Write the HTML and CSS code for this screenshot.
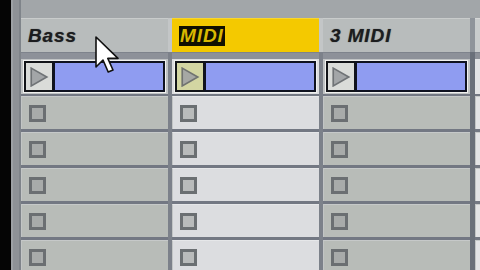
FILE: index.html
```html
<!DOCTYPE html>
<html>
<head>
<meta charset="utf-8">
<link rel="stylesheet" href="styles.css">
</head>
<body>
<div class="screen">
  <div class="edge-black"></div>
  <div class="edge-gray"></div>
  <div class="tracks">
    <div class="track">
      <div class="header"><span class="name">Bass</span></div>
      <div class="band"></div>
      <div class="clip-row"><div class="clip"><div class="play"><svg width="20" height="20" viewBox="0 0 18 18"><path d="M2 1 L16 9 L2 17 Z" fill="#a3a6a8" stroke="#6f7376" stroke-width="1.5"/></svg></div><div class="bar"></div></div></div>
      <div class="slot"><span class="stop"></span></div>
      <div class="slot"><span class="stop"></span></div>
      <div class="slot"><span class="stop"></span></div>
      <div class="slot"><span class="stop"></span></div>
      <div class="slot"><span class="stop"></span></div>
    </div>
    <div class="sep"></div>
    <div class="track sel">
      <div class="header"><span class="name hl">MIDI</span></div>
      <div class="band"></div>
      <div class="clip-row"><div class="clip"><div class="play"><svg width="20" height="20" viewBox="0 0 18 18"><path d="M2 1 L16 9 L2 17 Z" fill="#a6a8a4" stroke="#707370" stroke-width="1.5"/></svg></div><div class="bar"></div></div></div>
      <div class="slot"><span class="stop"></span></div>
      <div class="slot"><span class="stop"></span></div>
      <div class="slot"><span class="stop"></span></div>
      <div class="slot"><span class="stop"></span></div>
      <div class="slot"><span class="stop"></span></div>
    </div>
    <div class="sep"></div>
    <div class="track">
      <div class="header"><span class="name">3 MIDI</span></div>
      <div class="band"></div>
      <div class="clip-row"><div class="clip"><div class="play"><svg width="20" height="20" viewBox="0 0 18 18"><path d="M2 1 L16 9 L2 17 Z" fill="#a3a6a8" stroke="#6f7376" stroke-width="1.5"/></svg></div><div class="bar"></div></div></div>
      <div class="slot"><span class="stop"></span></div>
      <div class="slot"><span class="stop"></span></div>
      <div class="slot"><span class="stop"></span></div>
      <div class="slot"><span class="stop"></span></div>
      <div class="slot"><span class="stop"></span></div>
    </div>
    <div class="divider"></div>
    <div class="track next">
      <div class="header"></div>
      <div class="band"></div>
      <div class="clip-row"></div>
      <div class="slot"></div>
      <div class="slot"></div>
      <div class="slot"></div>
      <div class="slot"></div>
      <div class="slot"></div>
    </div>
  </div>
  <svg class="cursor" width="26" height="38" viewBox="0 0 13 19">
    <path d="M0.5 0.5 L0.5 15.5 L4 12 L6.6 18 L9 17 L6.4 11.2 L11.5 11.2 Z" fill="#ffffff" stroke="#111111" stroke-width="0.8" stroke-linejoin="round"/>
  </svg>
</div>
</body>
</html>
```
FILE: styles.css
```css
html, body {
  margin: 0;
  padding: 0;
}
body {
  width: 480px;
  height: 270px;
  overflow: hidden;
  background: #a2a6a9;
  font-family: "Liberation Sans", Arial, sans-serif;
}
.screen {
  position: relative;
  display: flex;
  width: 480px;
  height: 270px;
  overflow: hidden;
}
.edge-black {
  width: 11px;
  flex: none;
  background: #050505;
}
.edge-gray {
  width: 10px;
  flex: none;
  background: #8e9297;
  border-left: 2px solid #9da1a5;
  box-sizing: border-box;
  box-shadow: inset -2px 0 0 #7f848a;
}
.tracks {
  display: flex;
  flex: none;
  padding-top: 18px;
}
.track {
  width: 147px;
  flex: none;
  display: flex;
  flex-direction: column;
  background: #737883;
}
.sep {
  width: 4px;
  flex: none;
  background: linear-gradient(#c3c6c7 0 34px, #7c818a 34px);
}
.divider {
  width: 5px;
  flex: none;
  background: linear-gradient(#8f949b 0 34px, #6a707a 34px);
}
.header {
  height: 34px;
  flex: none;
  box-sizing: border-box;
  background: #b8bcbc;
  border-top: 1px solid #c9cccc;
  display: flex;
  align-items: center;
  padding-left: 7px;
}
.name {
  font-weight: bold;
  font-style: italic;
  font-size: 19px;
  color: #1c1d1f;
  letter-spacing: 0.9px;
  text-shadow: 0 0 1px rgba(0,0,0,0.6);
}
.sel .header {
  background: #f4c900;
  border-top-color: #f8d630;
}
.name.hl {
  background: #111000;
  color: #d9b800;
  padding: 1px 1px 1px 1px;
  line-height: 18px;
  text-shadow: none;
}
.band {
  height: 7px;
  flex: none;
  background: #8d9199;
  border-top: 1px solid #7e838c;
  box-sizing: border-box;
}
.clip-row {
  height: 35px;
  flex: none;
  background: #c0c3c4;
  box-sizing: border-box;
  padding: 1px 2px 1px 2px;
}
.sel .clip-row {
  background: #dcdde0;
}
.clip {
  height: 100%;
  box-sizing: border-box;
  border: 1px solid #f0f1ef;
  display: flex;
}
.play {
  width: 29px;
  flex: none;
  box-sizing: border-box;
  background: #dadcd9;
  border: 2px solid #121418;
  border-right-width: 1px;
  display: flex;
  align-items: center;
  justify-content: center;
}
.sel .play {
  background: #d3d6a2;
}
.bar {
  flex: 1;
  background: #8f9cf1;
  border: 2px solid #0f1220;
  border-left-width: 2px;
}
.slot {
  height: 33px;
  flex: none;
  margin-top: 3px;
  box-sizing: border-box;
  background: #b8bcb8;
  border-top: 1px solid #c6c9c9;
  border-left: 1px solid #c2c5c5;
  display: flex;
  align-items: center;
  padding-left: 7px;
}
.clip-row + .slot {
  margin-top: 2px;
}
.sel .slot {
  background: #dcdde0;
  border-top-color: #e6e7e9;
}
.stop {
  width: 17px;
  height: 17px;
  box-sizing: border-box;
  border: 3px solid #6b6f72;
  background: #a8abaa;
}
.sel .stop {
  background: #b9bbbb;
}
.next .header {
  background: #c9cccd;
  border-top-color: #d6d8d8;
}
.next .clip-row,
.next .slot {
  background: #e3e4e6;
}
.cursor {
  position: absolute;
  left: 95px;
  top: 36px;
}
```
